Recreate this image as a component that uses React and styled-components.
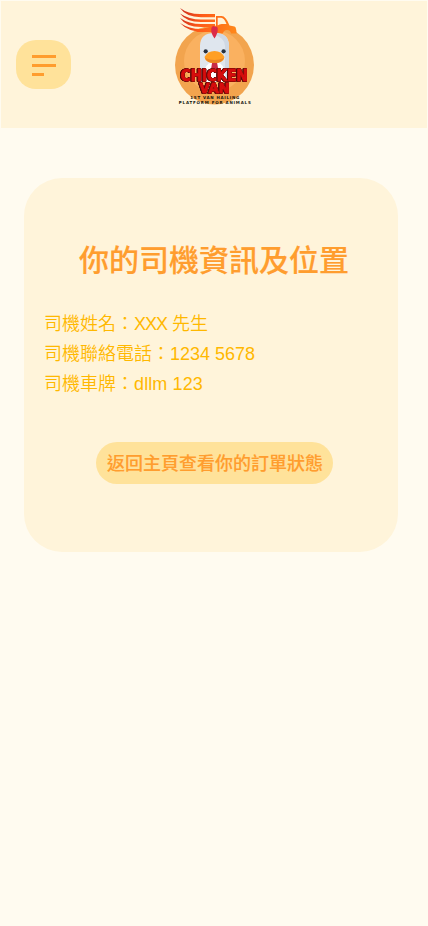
import React from "react";
import styled, { createGlobalStyle } from "styled-components";

const GlobalStyle = createGlobalStyle`
  * { box-sizing: border-box; }
  body {
    margin: 0;
    background: #fffbf0;
    font-family: "Liberation Sans", "Noto Sans CJK TC", sans-serif;
  }
`;

const Page = styled.main`
  min-height: 926px;
  padding: 1px 1px 0;
  background: #fffbf0;
`;

const Header = styled.header`
  display: grid;
  grid-template-columns: 55px 1fr 55px;
  align-items: start;
  height: 127px;
  padding: 0 15px;
  background: #fff4da;
`;

const MenuButton = styled.button`
  display: flex;
  flex-direction: column;
  align-items: flex-start;
  gap: 6px;
  width: 55px;
  height: 49px;
  margin-top: 39px;
  padding: 15px 0 0 16px;
  border: 0;
  border-radius: 20px;
  background: #ffe29a;
`;

const MenuLine = styled.span`
  width: ${({ $short }) => ($short ? 12 : 24)}px;
  height: 3px;
  background: #ff9d2e;
`;

const LogoImage = styled.svg`
  display: block;
  width: 100px;
  height: 110px;
  margin: -1px 0 0 94px;
`;

const BrandText = styled.g`
  fill: #d60d0d;
  stroke: #d60d0d;
  stroke-width: 1px;
  stroke-linejoin: round;
  font-family: "DejaVu Sans", sans-serif;
  font-weight: 700;
  text-anchor: middle;
  filter: drop-shadow(0.5px 0 0.2px #5c0a08) drop-shadow(-0.5px 0 0.2px #5c0a08)
    drop-shadow(0 0.5px 0.2px #380705);
`;

const Tagline = styled.g`
  fill: #15120c;
  font-family: "DejaVu Sans", sans-serif;
  font-size: 4px;
  font-weight: 700;
  text-anchor: middle;
`;

const Card = styled.section`
  display: flex;
  flex-direction: column;
  width: 374px;
  height: 374px;
  margin: 50px 0 0 23px;
  padding: 58px 20px 0;
  border-radius: 38px;
  background: #fff4da;
`;

const Title = styled.h1`
  margin: 0 -10px 0 -4px;
  padding-left: 39px;
  color: #ff9d2e;
  font-family: "Noto Sans CJK TC", sans-serif;
  font-size: 30px;
  font-weight: 500;
  line-height: 44px;
  white-space: nowrap;
  -webkit-text-stroke: 0.2px #ff9d2e;
`;

const Details = styled.div`
  margin-top: 29px;
  color: #ffb800;
  font-size: 18px;
  font-weight: 350;
  line-height: 30px;
`;

const Detail = styled.p`
  margin: 0;
`;

const DriverInitials = styled.span`
  letter-spacing: -1px;
`;

const PlateNumber = styled.span`
  letter-spacing: 0.12px;
`;

const HomeButton = styled.button`
  width: 237px;
  height: 42px;
  margin: 43px 0 0 52px;
  padding: 0 0 2px 1px;
  border: 0;
  border-radius: 21px;
  background: #ffe29a;
  color: #ff9d2e;
  font-family: "Noto Sans CJK TC", sans-serif;
  font-size: 18px;
  font-weight: 500;
  line-height: 40px;
  white-space: nowrap;
  -webkit-text-stroke: 0.12px #ff9d2e;
`;

function Logo() {
  return (
    <LogoImage viewBox="165 0 100 110" role="img" aria-label="Chicken Van">
      <defs>
        <linearGradient id="vanFill" gradientUnits="userSpaceOnUse" x1="180" y1="8" x2="236" y2="24">
          <stop offset="0" stopColor="#c92a20" />
          <stop offset=".4" stopColor="#ff5a18" />
          <stop offset="1" stopColor="#ff861a" />
        </linearGradient>
        <clipPath id="badge"><circle cx="214.500" cy="65" r="39.500" /></clipPath>
      </defs>
      <circle cx="214.500" cy="65" r="39.500" fill="#f2a44e" />
      <g clipPath="url(#badge)">
        <circle cx="214.500" cy="61" r="30.500" fill="#fab160" />
        <path d="M198 82l2-14V46Q200 33 214.500 33T229 46v22l2 14z" fill="#dfe6ee" />
        <path d="M214.500 33Q229 33 229 46v22l2 14h-4l-2-14V46q0-8-10.500-11" fill="#cfd8e3" />
        <path d="M203 82l2-14q3-6 9.500-6t9.500 6l2 14z" fill="#fff" />
      </g>
      <g fill="url(#vanFill)">
        <path d="M180 8q8 6 20 6h15v3.300h-14Q186 17 180 8" />
        <path d="M180 13.500q9 6 21 6h14v2.500h-14q-15 0-21-8.500" />
        <path d="M180 18q9 6 21 6h14v3h-14q-15 0-21-9" />
        <path d="M180 23q9 6 21 6l15-1v3.500l-8 .5q-19 1-28-9" />
        <path fillRule="evenodd" d="M216 16h5.500q4.500 0 8 9.500l5 1q1.500.5 1.500 2.500.5 1 .5 4.500h-5.500q-.5-3.500-4-3.500t-4 3.500l-13-1.500-14 0q7-5 20-5.500zm1.700 1.800V25.500q1.500-1.500 4-1.500h4.800q-2.500-6.200-5.300-6.200z" />
      </g>
      <path d="M214.500 38.500q-3.500-5-3.300-9 .2-3.500 2.500-3.500 1 0 1 .8 2.300-1 3 1.200.5 5-3.200 10.500" fill="#dc2b48" />
      <circle cx="205.700" cy="51.300" r="2.100" fill="#27313e" />
      <circle cx="223.600" cy="51.300" r="2.100" fill="#27313e" />
      <path d="M212.200 62h4.800l1 6q-1 3-3.400 3t-3.400-3z" fill="#c92b46" />
      <path d="M204.500 57q3-6 10-6t10 6q-1 6-10 6t-10-6" fill="#ff9f23" />
      <path d="M205 58q5 2 9.500 2t9.500-2q-2 5-9.500 5t-9.500-5" fill="#e98524" />
      <BrandText>
        <text x="214.300" y="80.900" fontSize="16" textLength="67" lengthAdjust="spacingAndGlyphs">CHICKEN</text>
        <text x="214.500" y="93.300" fontSize="14.500" textLength="30" lengthAdjust="spacingAndGlyphs">VAN</text>
      </BrandText>
      <Tagline>
        <text x="214.800" y="98.500" textLength="49">1ST VAN HAILING</text>
        <text x="214.800" y="103.900" textLength="72">PLATFORM FOR ANIMALS</text>
      </Tagline>
    </LogoImage>
  );
}

export default function App() {
  return (
    <>
      <GlobalStyle />
      <Page>
        <Header>
          <MenuButton aria-label="選單">
            <MenuLine />
            <MenuLine />
            <MenuLine $short />
          </MenuButton>
          <Logo />
        </Header>
        <Card>
          <Title>你的司機資訊及位置</Title>
          <Details>
            <Detail>司機姓名：<DriverInitials>XXX</DriverInitials> 先生</Detail>
            <Detail>司機聯絡電話：1234 5678</Detail>
            <Detail>司機車牌：<PlateNumber>dllm 123</PlateNumber></Detail>
          </Details>
          <HomeButton>返回主頁查看你的訂單狀態</HomeButton>
        </Card>
      </Page>
    </>
  );
}
